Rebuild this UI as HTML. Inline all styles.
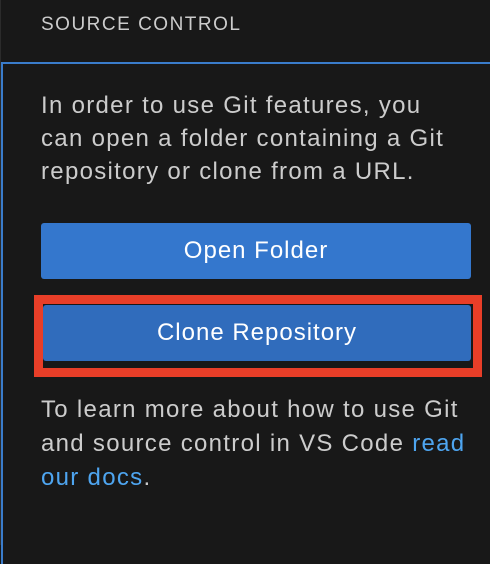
<!DOCTYPE html>
<html><head><meta charset="utf-8"><style>
html,body{margin:0;padding:0;background:#181818;width:490px;height:545px;overflow:hidden;font-family:"Liberation Sans",sans-serif;}
.hdr{position:absolute;left:41px;top:14px;font-size:19px;color:#cccccc;letter-spacing:1.5px;}
.pane{position:absolute;left:1px;top:62px;width:500px;height:500px;border-top:2px solid #3a7ccb;border-left:2px solid #3a7ccb;}
.lb{position:absolute;left:0;top:0;width:1px;height:545px;background:#2b2b2b;}
.p{position:absolute;left:41px;color:#cccccc;font-size:24px;line-height:33px;width:460px;letter-spacing:1.3px;white-space:nowrap;}
.btn{position:absolute;color:#fff;font-size:24px;letter-spacing:1px;text-align:center;border-radius:3px;}
.red{position:absolute;left:34px;top:295px;width:430px;height:64px;border:9px solid #e83e28;}
a{color:#4ea5f0;text-decoration:none;}
</style></head><body>
<div class="lb"></div>
<div class="hdr">SOURCE CONTROL</div>
<div class="pane"></div>
<div class="p" style="top:89px">In order to use Git features, you<br>can open a folder containing a Git<br>repository or clone from a URL.</div>
<div class="btn" style="left:41px;top:223px;width:430px;height:56px;line-height:56px;background:#3477cd;">Open Folder</div>
<div class="red"></div>
<div class="btn" style="left:43px;top:305px;width:428px;height:56px;line-height:56px;background:#306cbc;">Clone Repository</div>
<div class="p" style="top:393px;line-height:34px">To learn more about how to use Git<br>and source control in VS Code <a>read</a><br><a>our docs</a>.</div>
</body></html>
